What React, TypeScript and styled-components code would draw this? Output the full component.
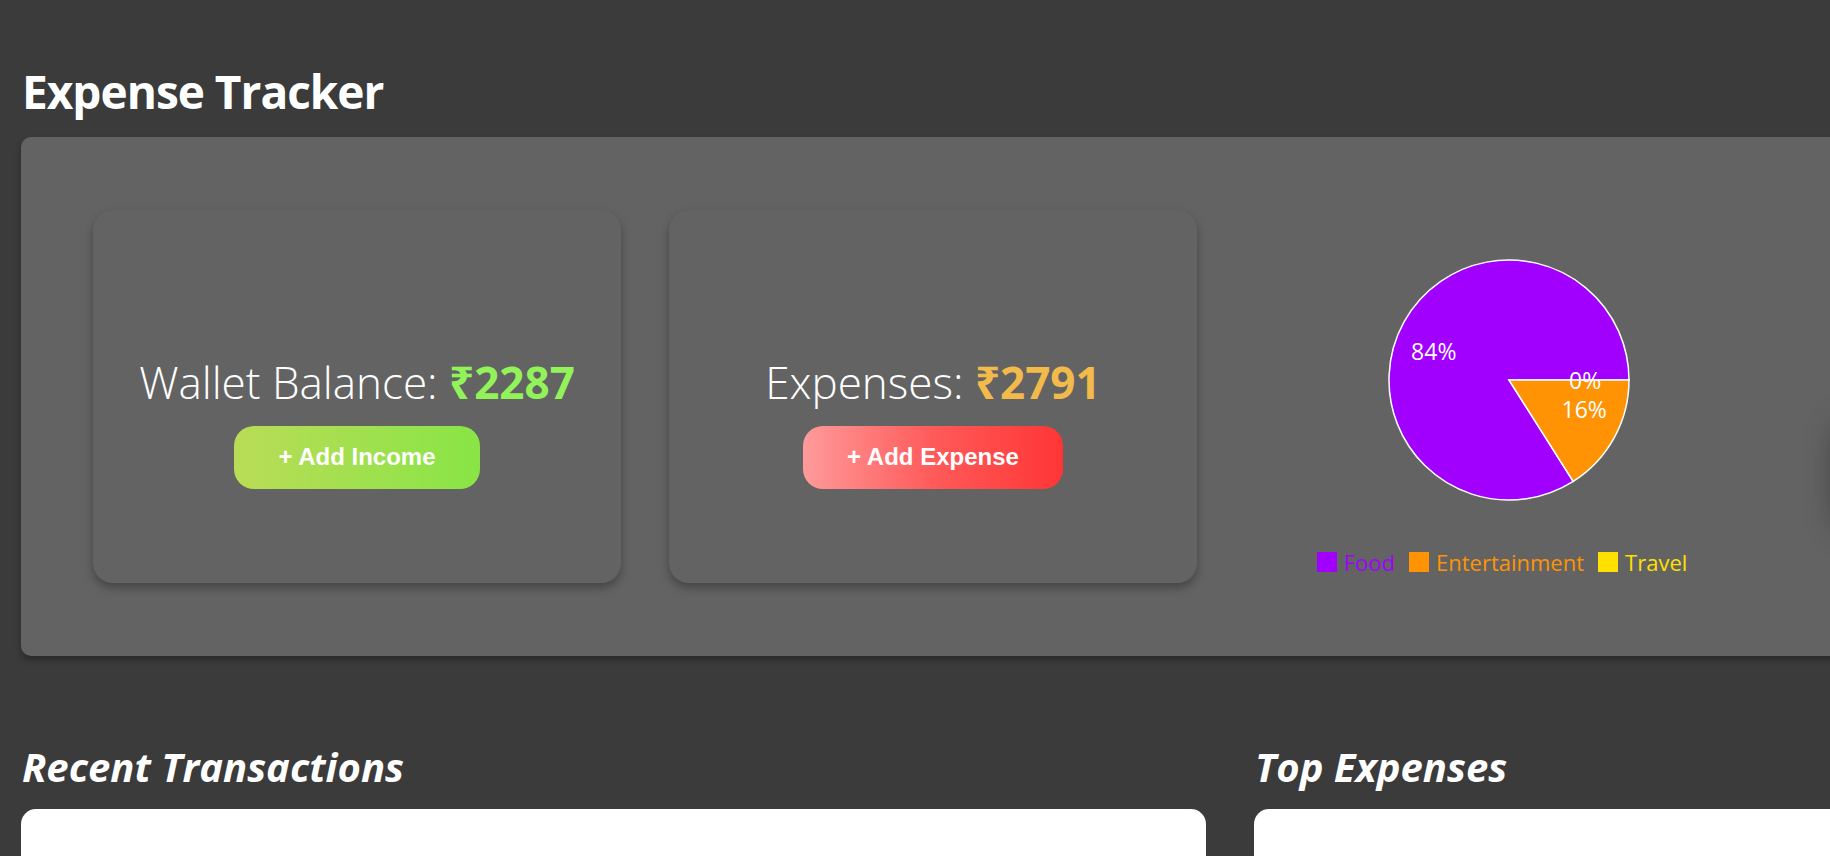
import React from "react";
import styled, { createGlobalStyle } from "styled-components";

const GlobalStyle = createGlobalStyle`
  html, body {
    margin: 0;
    padding: 0;
    background: #3b3b3b;
    overflow: hidden;
    font-family: "Open Sans", "Noto Sans", "DejaVu Sans", sans-serif;
  }
`;

const Page = styled.div`
  padding: 0 21px;
  width: 2400px;
`;

const Title = styled.h1`
  margin: 66px 0 0 1px;
  font-size: 46px;
  line-height: 50px;
  font-weight: 700;
  letter-spacing: -1px;
  color: #ffffff;
`;

const Summary = styled.section`
  margin-top: 21px;
  display: flex;
  align-items: stretch;
  gap: 48px;
  padding: 73px 72px;
  background: #636363;
  border-radius: 10px;
  box-shadow: 0 4px 6px rgba(0, 0, 0, 0.3);
`;

const Card = styled.div`
  flex: 0 0 528px;
  height: 373px;
  box-sizing: border-box;
  padding-top: 50px;
  display: flex;
  flex-direction: column;
  align-items: center;
  justify-content: center;
  background: #636363;
  border-radius: 20px;
  box-shadow: 0 5px 10px rgba(0, 0, 0, 0.3);
`;

const GhostCard = styled.div`
  flex: 0 0 528px;
  height: 110px;
  align-self: flex-end;
  margin-left: 14px;
  margin-bottom: 55px;
  background: #636363;
  border-radius: 20px;
  box-shadow: 0 4px 30px rgba(0, 0, 0, 0.35);
`;

const Heading = styled.div`
  font-size: 44px;
  line-height: 54px;
  font-weight: 300;
  color: #ffffff;
  white-space: nowrap;
`;

const Amount = styled.span<{ $color: string }>`
  font-weight: 700;
  color: ${(p) => p.$color};
`;

const ActionButton = styled.button<{ $from: string; $mid: string; $to: string }>`
  margin-top: 17px;
  height: 63px;
  padding: 0 44px;
  border: none;
  border-radius: 20px;
  background: linear-gradient(90deg, ${(p) => p.$from} 0%, ${(p) => p.$mid} 50%, ${(p) => p.$to} 100%);
  color: #ffffff;
  font-family: "Liberation Sans", Arial, sans-serif;
  font-weight: 700;
  font-size: 24px;
  cursor: pointer;
`;

const ChartBox = styled.div`
  flex: 0 0 528px;
  height: 373px;
  box-sizing: border-box;
  padding-top: 20px;
  display: flex;
  flex-direction: column;
  align-items: center;
`;

const Legend = styled.ul`
  margin: 20px 0 0;
  padding: 0;
  list-style: none;
  display: flex;
  align-items: center;
  height: 24px;
`;

const LegendItem = styled.li<{ $color: string }>`
  display: flex;
  align-items: center;
  margin-right: 14px;
  font-size: 22px;
  line-height: 24px;
  color: ${(p) => p.$color};
`;

const Swatch = styled.span<{ $color: string }>`
  width: 20px;
  height: 20px;
  margin-right: 7px;
  background: ${(p) => p.$color};
`;

const Lower = styled.section`
  margin-top: 91px;
  display: grid;
  grid-template-columns: 1185px 1167px;
  gap: 48px;
`;

const Column = styled.div`
  display: flex;
  flex-direction: column;
`;

const SectionTitle = styled.h2`
  margin: 0 0 22px 1px;
  font-size: 40px;
  line-height: 40px;
  font-weight: 700;
  font-style: italic;
  color: #ffffff;
`;

const WhiteBox = styled.div`
  height: 320px;
  background: #ffffff;
  border-radius: 15px;
`;

const slices = [
  { name: "Food", value: 2344, color: "#a100ff" },
  { name: "Entertainment", value: 447, color: "#ff9304" },
  { name: "Travel", value: 0, color: "#ffe000" },
];

const CX = 264;
const CY = 150;
const R = 120;

const pt = (a: number, r: number) => {
  const rad = (a * Math.PI) / 180;
  return [CX + r * Math.cos(rad), CY - r * Math.sin(rad)];
};

const PieChart: React.FC = () => {
  const total = slices.reduce((s, d) => s + d.value, 0);
  let angle = 0;
  const parts = slices.map((d) => {
    const span = (d.value / total) * 360;
    const start = angle;
    const end = angle + span;
    angle = end;
    return { ...d, start, end, span };
  });
  return (
    <svg width={528} height={300} viewBox="0 0 528 300">
      {parts.map((p) => {
        if (p.span <= 0) return null;
        const [x1, y1] = pt(p.start, R);
        const [x2, y2] = pt(p.end, R);
        const large = p.span > 180 ? 1 : 0;
        const d = `M${CX},${CY} L${x1},${y1} A${R},${R} 0 ${large} 0 ${x2},${y2} Z`;
        return <path key={p.name} d={d} fill={p.color} stroke="#ffffff" strokeWidth={1.5} />;
      })}
      {parts.map((p) => {
        const mid = (p.start + p.end) / 2;
        const [lx, ly] = pt(mid, R * 0.5);
        return (
          <text
            key={p.name + "-l"}
            x={lx}
            y={ly}
            fill="#ffffff"
            fontSize={23}
            fontFamily='"Open Sans", "Noto Sans", sans-serif'
            textAnchor={lx > CX ? "start" : "end"}
            dominantBaseline="central"
          >
            {`${Math.round((p.value / total) * 100)}%`}
          </text>
        );
      })}
    </svg>
  );
};

export default function App() {
  return (
    <>
      <GlobalStyle />
      <Page>
        <Title>Expense Tracker</Title>
        <Summary>
          <Card>
            <Heading>
              Wallet Balance: <Amount $color="#92f25a">₹2287</Amount>
            </Heading>
            <ActionButton $from="#b9dc56" $mid="#a2e04f" $to="#88e545">+ Add Income</ActionButton>
          </Card>
          <Card>
            <Heading>
              Expenses: <Amount $color="#f2b94b">₹2791</Amount>
            </Heading>
            <ActionButton $from="#ff9a9a" $mid="#ff5a5a" $to="#ff3535">+ Add Expense</ActionButton>
          </Card>
          <ChartBox>
            <PieChart />
            <Legend>
              {slices.map((s) => (
                <LegendItem key={s.name} $color={s.color}>
                  <Swatch $color={s.color} />
                  {s.name}
                </LegendItem>
              ))}
            </Legend>
          </ChartBox>
          <GhostCard />
        </Summary>
        <Lower>
          <Column>
            <SectionTitle>Recent Transactions</SectionTitle>
            <WhiteBox />
          </Column>
          <Column>
            <SectionTitle>Top Expenses</SectionTitle>
            <WhiteBox />
          </Column>
        </Lower>
      </Page>
    </>
  );
}
